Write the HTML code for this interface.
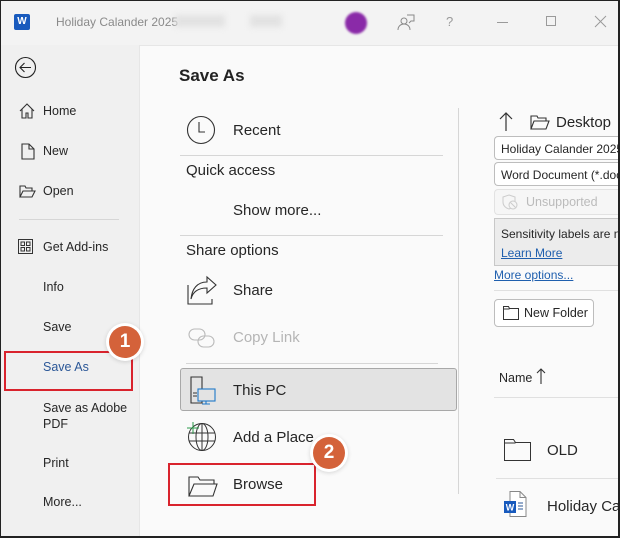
<!DOCTYPE html>
<html><head><meta charset="utf-8"><style>
*{margin:0;padding:0;box-sizing:border-box}
html,body{width:620px;height:538px;overflow:hidden}
body{background:#f3f3f3;font-family:"Liberation Sans",sans-serif;color:#262626;position:relative}
.a{position:absolute;white-space:nowrap}
.frame{position:absolute;left:0;top:0;width:620px;height:538px;border:1px solid #222;border-right:2px solid #222;border-bottom:2px solid #222;pointer-events:none;z-index:9}
.side{position:absolute;left:0;top:45px;width:139px;height:493px;background:#f0f0f0}
.main{position:absolute;left:139px;top:45px;width:481px;height:493px;background:#fafafa;border-left:1px solid #e6e6e6;border-top:1px solid #e6e6e6}
.si{font-size:12.5px;color:#262626}
.mi{font-size:15px;color:#262626}
.hr{position:absolute;height:1px;background:#d6d6d6}
.badge{position:absolute;width:32px;height:32px;border-radius:50%;background:#d4623a;color:#fff;font-weight:bold;font-size:19px;text-align:center;line-height:32px;box-shadow:0 0 0 3px #fff,0 1px 4px 3px rgba(0,0,0,.15);z-index:5}
.red{position:absolute;border:2px solid #d9232d;z-index:4}
.box{position:absolute;border:1px solid #bdbdbd;border-right:none;border-radius:4px 0 0 4px;background:#fff;font-size:12px;padding:5px 6px;overflow:hidden;white-space:nowrap}
svg{position:absolute;overflow:visible}
.clip{position:absolute;left:0;top:0;width:620px;height:538px;overflow:hidden}
</style></head><body><div class="clip">
<div class="a" style="left:14px;top:14px;width:16px;height:16px;background:#185abd;border-radius:2px;color:#fff;font-size:10px;font-weight:bold;text-align:center;line-height:16px">W</div>
<div class="a" style="left:56px;top:15px;font-size:12px;color:#8a8a8a">Holiday Calander 2025</div>
<div class="a" style="left:175px;top:15px;width:50px;height:12px;background:#e2e2e2;filter:blur(3px)"></div>
<div class="a" style="left:250px;top:15px;width:32px;height:12px;background:#e2e2e2;filter:blur(3px)"></div>
<div class="a" style="left:345px;top:12px;width:22px;height:22px;border-radius:50%;background:#8a2aa8;filter:blur(1px)"></div>
<svg style="left:397px;top:14px" width="18" height="18" fill="none" stroke="#8a8a8a" stroke-width="1"><circle cx="7" cy="7" r="3"/><path d="M1 16c0-4 3-6 6-6s6 2 6 6M10 1h7v6h-3l-2 2"/></svg>
<div class="a" style="left:446px;top:14px;font-size:13px;color:#9a9a9a">?</div>
<div class="a" style="left:497px;top:22px;width:11px;height:1px;background:#9a9a9a"></div>
<div class="a" style="left:546px;top:16px;width:10px;height:10px;border:1px solid #9a9a9a"></div>
<svg style="left:595px;top:16px" width="12" height="12" stroke="#9a9a9a" stroke-width="1"><path d="M0 0L11 11M11 0L0 11"/></svg>

<div class="side"></div>
<div class="main"></div>

<svg style="left:15px;top:57px" width="22" height="22" fill="none" stroke="#222" stroke-width="1.1"><circle cx="10.5" cy="10.5" r="10"/><path d="M16 10.5H5M9.5 6l-4.5 4.5 4.5 4.5"/></svg>
<svg style="left:19px;top:103px" width="16" height="16" fill="none" stroke="#333" stroke-width="1.1"><path d="M1 8L8 1l7 7M3 6v9h4v-5h2v5h4V6"/></svg>
<div class="a si" style="left:43px;top:104px">Home</div>
<svg style="left:21px;top:143px" width="14" height="17" fill="none" stroke="#333" stroke-width="1.1"><path d="M1 1h7l5 5v10H1zM8 1v5h5"/></svg>
<div class="a si" style="left:43px;top:144px">New</div>
<svg style="left:19px;top:185px" width="17" height="13" fill="none" stroke="#333" stroke-width="1.1"><path d="M1 12V1h5l1 2h6v3M1 12l3-6h12l-3 6z"/></svg>
<div class="a si" style="left:43px;top:184px">Open</div>
<div class="hr" style="left:19px;top:219px;width:100px"></div>
<svg style="left:18px;top:239px" width="15" height="15" fill="none" stroke="#333" stroke-width="1"><rect x=".5" y=".5" width="14" height="14"/><rect x="3" y="3" width="3.5" height="3.5"/><rect x="8.5" y="3" width="3.5" height="3.5"/><rect x="3" y="8.5" width="3.5" height="3.5"/><rect x="8.5" y="8.5" width="3.5" height="3.5"/></svg>
<div class="a si" style="left:43px;top:240px">Get Add-ins</div>
<div class="a si" style="left:43px;top:280px">Info</div>
<div class="a si" style="left:43px;top:320px">Save</div>
<div class="a si" style="left:43px;top:360px;color:#2b5797">Save As</div>
<div class="red" style="left:4px;top:351px;width:129px;height:40px"></div>
<div class="badge" style="left:109px;top:326px">1</div>
<div class="a si" style="left:43px;top:400px;line-height:16px;white-space:normal;width:90px">Save as Adobe PDF</div>
<div class="a si" style="left:43px;top:456px">Print</div>
<div class="a si" style="left:43px;top:495px">More...</div>

<div class="a" style="left:179px;top:66px;font-size:17px;font-weight:bold;color:#222">Save As</div>
<svg style="left:187px;top:116px" width="28" height="28" fill="none" stroke="#333" stroke-width="1.1"><circle cx="14" cy="14" r="13.5"/><path d="M12 6v10h6"/></svg>
<div class="a mi" style="left:233px;top:122px">Recent</div>
<div class="hr" style="left:180px;top:155px;width:263px"></div>
<div class="a mi" style="left:186px;top:162px">Quick access</div>
<div class="a mi" style="left:233px;top:202px">Show more...</div>
<div class="hr" style="left:180px;top:235px;width:263px"></div>
<div class="a mi" style="left:186px;top:242px">Share options</div>
<svg style="left:187px;top:277px" width="30" height="28" fill="none" stroke="#333" stroke-width="1.1"><path d="M1 8v19h24v-5M4 22c2-8 8-11 16-11v5l9-8-9-8v5C10 5 5 12 4 22z"/></svg>
<div class="a mi" style="left:233px;top:282px">Share</div>
<svg style="left:188px;top:328px" width="28" height="20" fill="none" stroke="#bbb" stroke-width="1.1"><rect x="1" y="1" width="16" height="11" rx="5.5"/><rect x="10" y="8" width="16" height="11" rx="5.5"/></svg>
<div class="a mi" style="left:233px;top:329px;color:#b5b5b5">Copy Link</div>
<div class="hr" style="left:186px;top:363px;width:252px"></div>
<div class="a" style="left:180px;top:368px;width:277px;height:43px;background:#e3e3e3;border:1px solid #a8a8a8;border-radius:3px"></div>
<svg style="left:190px;top:376px" width="30" height="30" fill="none" stroke-width="1.1"><path d="M1 1h11v26H1z" stroke="#333"/><path d="M3 17h4M3 20h4" stroke="#333"/><rect x="8" y="13" width="17" height="12" stroke="#1e78c8" fill="#e3e3e3"/><path d="M16 25v3M12 28h8" stroke="#1e78c8"/></svg>
<div class="a mi" style="left:233px;top:382px">This PC</div>
<svg style="left:187px;top:421px" width="30" height="30" fill="none" stroke="#333" stroke-width="1"><circle cx="15" cy="16" r="13.5"/><ellipse cx="15" cy="16" rx="6" ry="13.5"/><path d="M2 12h26M2 20h26M15 2.5v27"/><path d="M6 1v12M0 7h12" stroke="#2a9a4a"/></svg>
<div class="a mi" style="left:233px;top:429px">Add a Place</div>
<svg style="left:188px;top:476px" width="30" height="22" fill="none" stroke="#333" stroke-width="1.1"><path d="M1 20V1h9l2 3h14v4M1 20l5-12h23l-4 12z"/></svg>
<div class="a mi" style="left:233px;top:476px">Browse</div>
<div class="red" style="left:168px;top:463px;width:148px;height:43px"></div>
<div class="badge" style="left:313px;top:437px">2</div>
<div class="a" style="left:458px;top:108px;width:1px;height:386px;background:#d6d6d6"></div>

<svg style="left:499px;top:112px" width="14" height="20" fill="none" stroke="#333" stroke-width="1.2"><path d="M7 19V1M1 7l6-6 6 6"/></svg>
<svg style="left:530px;top:115px" width="20" height="15" fill="none" stroke="#333" stroke-width="1.1"><path d="M1 14V1h6l1 2h8v3M1 14l3-8h15l-3 8z"/></svg>
<div class="a mi" style="left:556px;top:114px">Desktop</div>
<div class="box" style="left:494px;top:136px;width:126px;height:24px">Holiday Calander 2025</div>
<div class="box" style="left:494px;top:162px;width:126px;height:24px">Word Document (*.docx)</div>
<div class="box" style="left:494px;top:189px;width:126px;height:26px;background:#f6f6f6;border-color:#e2e2e2;color:#bbb;padding-left:31px;font-size:12.5px">Unsupported</div>
<svg style="left:502px;top:194px" width="16" height="16" fill="none" stroke="#ccc" stroke-width="1"><path d="M7 1l6 2v5c0 4-3 6-6 7-3-1-6-3-6-7V3z"/><circle cx="11" cy="11" r="4" fill="#f6f6f6"/><path d="M8.5 8.5l5 5"/></svg>
<div class="a" style="left:494px;top:218px;width:126px;height:48px;background:#ececec;border:1px solid #c8c8c8;border-right:none;font-size:12px;padding:6px 6px;line-height:19px;overflow:hidden">Sensitivity labels are not<br><span style="color:#1f5fae;text-decoration:underline">Learn More</span></div>
<div class="a" style="left:494px;top:268px;font-size:12px;color:#1f5fae;text-decoration:underline">More options...</div>
<div class="hr" style="left:494px;top:290px;width:126px;background:#e0e0e0"></div>
<div class="box" style="left:494px;top:299px;width:100px;height:28px;padding:6px 0 0 29px;font-size:12.5px;border-right:1px solid #bdbdbd;border-radius:4px">New Folder</div>
<svg style="left:503px;top:306px" width="16" height="14" fill="none" stroke="#333" stroke-width="1"><path d="M.5 13.5V.5h5l1 2h9v11z M.5 3h6"/></svg>
<div class="a" style="left:499px;top:371px;font-size:12.5px">Name</div>
<svg style="left:536px;top:368px" width="10" height="16" fill="none" stroke="#333" stroke-width="1.1"><path d="M5 16V1M1 5l4-4 4 4"/></svg>
<div class="hr" style="left:494px;top:397px;width:126px;background:#e0e0e0"></div>
<svg style="left:504px;top:439px" width="28" height="22" fill="none" stroke="#333" stroke-width="1"><path d="M.5 21.5V.5h9l2 3h15v18z M.5 4h11"/></svg>
<div class="a mi" style="left:547px;top:442px">OLD</div>
<div class="hr" style="left:496px;top:478px;width:124px;background:#e0e0e0"></div>
<svg style="left:504px;top:491px" width="24" height="26" fill="none" stroke-width="1"><path d="M6 .5h10l6 6v19H6z M16 .5v6h6" stroke="#888" fill="#fff"/><path d="M14 12h5M14 15h5M14 18h5" stroke="#2b5797"/><rect x="0" y="10" width="12" height="12" fill="#185abd" stroke="none"/><text x="6" y="19.5" font-size="9" font-weight="bold" fill="#fff" text-anchor="middle" font-family="Liberation Sans">W</text></svg>
<div class="a mi" style="left:547px;top:498px;width:73px;overflow:hidden">Holiday Calander</div>

<div class="frame"></div>
</div></body></html>
